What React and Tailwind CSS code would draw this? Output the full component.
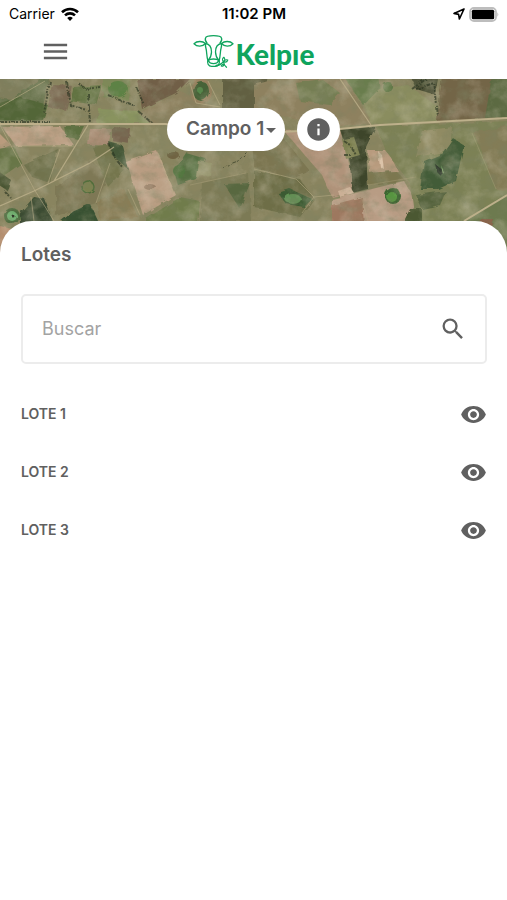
import React, { useState } from "react";
import { MdArrowDropDown, MdInfo, MdMenu, MdSearch, MdVisibility } from "react-icons/md";

const lots = ["LOTE 1", "LOTE 2", "LOTE 3"];

function StatusBar() {
  return (
    <div className="grid grid-cols-3 items-center h-7 pl-[9px] pr-2 text-black text-sm">
      <div className="flex items-center gap-1.5">
        <span>Carrier</span>
        <svg viewBox="0 0 18 14" className="w-[18px] h-[14px]" fill="none" stroke="black" strokeWidth="2.6">
          <path d="M1 5.2a11.6 11.6 0 0 1 16 0" />
          <path d="M4 8.4a7.3 7.3 0 0 1 10 0" />
          <path d="M9 14 6.2 11a4 4 0 0 1 5.6 0Z" fill="black" stroke="none" />
        </svg>
      </div>
      <span className="text-center text-[15px] leading-5 font-semibold">11:02 PM</span>
      <div className="flex items-center justify-end gap-1">
        <svg viewBox="0 0 12 12" className="w-3 h-3" fill="none" stroke="black" strokeWidth="1.6" strokeLinejoin="round">
          <path d="M11 1 1 5.4l4.6 1L6.4 11Z" />
        </svg>
        <svg viewBox="0 0 30 15" className="w-[30px] h-[15px]">
          <rect x="1" y="1" width="26" height="13" rx="4" fill="white" stroke="#bdbdbd" strokeWidth="1.8" />
          <rect x="2.8" y="2.8" width="22.4" height="9.4" rx="1.5" fill="black" />
          <path d="M28.4 5.2q1.8 2.3 0 4.6Z" fill="#bdbdbd" />
        </svg>
      </div>
    </div>
  );
}

function Logo() {
  return (
    <div className="flex items-center gap-0.5 text-[#0fa45d]">
      <svg viewBox="0 0 41 34" className="w-[41px] h-[34px]" fill="none" stroke="currentColor" strokeWidth="1.3" strokeLinecap="round" strokeLinejoin="round">
        {/* crown */}
        <path d="M14 8C12.500 6.500 12 4.500 12.500 3c.5-1.700 2-2.300 8-2.300s7.500.6 8 2.300c.5 1.500 0 3.500-1.500 5" />
        {/* ears */}
        <path d="M12.500 8.500C9.500 5.800 4 5.800 1 8.700c3 3.200 8.500 3.200 11.500-.2Z" />
        <path d="M28.500 8.500c3-2.700 8.500-2.700 11.500.2-3 3.200-8.500 3.200-11.500-.2Z" />
        {/* face */}
        <path d="M12.500 8.500c4 .5 6 4 6 8.500 0 4-1.500 6.500-3.500 9-1-3-1.200-6-1.500-9.500-.2-3-1.500-5-1-8Z" />
        <path d="M28.500 8.500c-4 .5-6 4-6 8.500 0 4 1.500 6.500 3.500 9 1-3 1.200-6 1.500-9.500.2-3 1.500-5 1-8Z" />
        {/* muzzle */}
        <path d="M15 25.500c2.500-2 8.500-2 11 0 1.500 2.500-.8 5.800-3.500 5.800h-4c-2.700 0-5-3.300-3.500-5.800Z" />
        <path d="M15.500 26c1.500 3.500 8.500 3.500 10 0" />
        {/* sprig */}
        <path d="M23 30.500c3 0 5.500-1.500 7.500-4M30.500 27c.3 2.300 1.300 3.800 3 5.200" />
        <path d="M30.800 26.500c-1.800-1-1.800-3 0-4.300 1.300 1.500 1.300 3.200 0 4.300ZM31 27c.5-1.800 2-2.600 3.800-2-.5 1.800-1.900 2.500-3.800 2ZM31.200 29.500c-1.500-.3-2.500.2-3 1.500 1.400.6 2.500 0 3-1.500Z" strokeWidth="1.1" />
      </svg>
      <span className="font-[Lato] font-black text-[28px] leading-8 pt-1">Kelpıe</span>
    </div>
  );
}

function FieldMap() {
  return (
    <svg viewBox="0 0 507 174" preserveAspectRatio="xMidYMid slice" className="absolute inset-0 w-full h-full" aria-hidden="true">
      <defs>
        <filter id="soil" x="0" y="0" width="100%" height="100%">
          <feTurbulence type="fractalNoise" baseFrequency="0.07 0.09" numOctaves="5" seed="8" />
          <feColorMatrix values="0 0 0 0 0.2  0 0 0 0 0.22  0 0 0 0 0.12  1.8 0 0 0 -0.76" />
        </filter>
        <filter id="dry" x="0" y="0" width="100%" height="100%">
          <feTurbulence type="fractalNoise" baseFrequency="0.05" numOctaves="5" seed="21" />
          <feColorMatrix values="0 0 0 0 0.75  0 0 0 0 0.68  0 0 0 0 0.54  0 1.8 0 0 -0.8" />
        </filter>
        <filter id="soft" x="-10%" y="-10%" width="120%" height="120%">
          <feTurbulence type="fractalNoise" baseFrequency="0.12" numOctaves="2" seed="4" />
          <feDisplacementMap in="SourceGraphic" scale="4" />
          <feGaussianBlur stdDeviation="0.6" />
        </filter>
      </defs>
      <rect width="507" height="174" fill="#89845f" />
      <g filter="url(#soft)">
        {/* north strip */}
        <path d="M-4 -4H50L40 42H-4Z" fill="#6b744f" />
        <path d="M-4 25 20 18 48 26 43 41H-4Z" fill="#526639" />
        <path d="M-4 -4h49L12 20-4 18Z" fill="#807e5b" />
        <path d="M52 5 72 6 66 32 48 28Z" fill="#7b6b52" />
        <path d="M74 8 102 6 96 26 70 22Z" fill="#627342" />
        <path d="M103-4h28l-2 26-26-4Z" fill="#7e8959" />
        <path d="M99 30 140 32 152 44H97Z" fill="#89935e" />
        <path d="M138 34 180 12 220 30 240 46H152Z" fill="#8d815f" />
        <path d="M137 0 190 0 176 14 142 30Z" fill="#715f46" />
        <path d="M222-4h46l-6 34h-40Z" fill="#626142" />
        <path d="M254 6 290-4 344-4 372 46 318 46 254 30Z" fill="#8e815e" />
        <path d="M296 4 322 0 340 14 330 26 300 22Z" fill="#757e52" />
        <path d="M343-4h36l2 18-18 12Z" fill="#697d4d" />
        <path d="M379 10 408 6 438 28 436 43 372 46 364 26Z" fill="#8a8d5f" />
        <path d="M410-4h30l-4 20-20-6Z" fill="#4c4f34" />
        <path d="M442-4h69v42l-74 5Z" fill="#736546" />
        <path d="M492-4h19v42l-26 1Z" fill="#5c6a43" />
        {/* fields under the main road */}
        <path d="M2 48 60 47 74 66 16 67Z" fill="#bb9f84" />
        <path d="M-4 51 11 66-4 72Z" fill="#b99b7d" />
        <path d="M64 47 84 47 78 60 66 58Z" fill="#5d7040" />
        <path d="M90 50h22l-4 16H88Z" fill="#a68a72" />
        <path d="M112 48 130 49 130 65 112 62Z" fill="#77654f" />
        <path d="M130 48h38l8 24-48 4Z" fill="#8b8762" />
        <path d="M-4 70 14 68 22 84-4 102Z" fill="#687646" />
        <path d="M24 86 58 70 50 104 32 98Z" fill="#71734e" />
        <path d="M-4 90 12 102 8 112-4 104Z" fill="#495433" />
        <path d="M56 108 92 82 108 98 96 124 56 137Z" fill="#7e7855" />
        <path d="M92 68 118 64 126 88 108 108Z" fill="#74764d" />
        <path d="M108 62 122 66 128 90 112 76Z" fill="#455838" />
        <path d="M96 124 124 110 138 138 100 141Z" fill="#897d56" />
        <path d="M126 83 157 72 176 116 143 136Z" fill="#b99d82" />
        <path d="M174 92 186 74 206 80 196 100 178 106Z" fill="#566f42" />
        <path d="M198 82 212 84 210 96 196 98Z" fill="#8e8e65" />
        <path d="M202 104 248 94 252 142 200 142Z" fill="#7c7a55" />
        <path d="M224 105 250 104 240 130Z" fill="#586840" />
        <path d="M20 134 34 118 45 120 54 146H20Z" fill="#3a4c31" />
        <path d="M56 146 74 132 90 125 100 146Z" fill="#375132" />
        <path d="M146 140 180 118 200 122 198 146H146Z" fill="#707b4c" />
        {/* east of the campo */}
        <path d="M284 52 340 50 356 112 332 118 322 96Z" fill="#b0937a" />
        <path d="M340 50 376 47 366 68 368 110 352 114 350 84Z" fill="#3d452c" />
        <path d="M342 60 354 58 360 76 346 80Z" fill="#7a7e4e" />
        <path d="M368 72 388 72 398 92 370 94Z" fill="#b89b7e" />
        <path d="M368 94 396 92 406 102 368 106Z" fill="#7b774f" />
        <path d="M332 120 404 102 420 130 408 146H332Z" fill="#b89c84" />
        <path d="M332 126 362 118 364 146H332Z" fill="#9d785f" />
        <path d="M254 92 300 100 314 120 300 138 254 128Z" fill="#6e6e47" />
        <path d="M254 62 284 60 310 92 292 100 254 88Z" fill="#7c7651" />
        <path d="M376 47 511 42V178H420L410 104 386 72Z" fill="#7c8154" />
        <path d="M422 52 452 48 450 72 416 78Z" fill="#908b63" />
        <path d="M424 82 444 74 454 60 464 66 456 102 438 110 420 110Z" fill="#425c38" />
        <path d="M416 116 446 112 440 126 422 130Z" fill="#55633c" />
        <path d="M474 54 511 46V112L496 110Z" fill="#837c56" />
        <path d="M466 140 511 114V178H490Z" fill="#6d7a50" />
        <path d="M478 140 493 140 490 150Z" fill="#8a5f46" />
        <path d="M-4 146 12 150V178H-4Z" fill="#b58f70" />
        <path d="M404 142 410 130 422 130 422 146Z" fill="#4b5833" />
      </g>
      {/* ponds and groves */}
      <g filter="url(#soft)">
        <ellipse cx="118" cy="10" rx="10" ry="8" fill="#5d8244" />
        <ellipse cx="201" cy="12" rx="11" ry="13" fill="#97815f" />
        <ellipse cx="201" cy="12" rx="8" ry="10" fill="#476238" />
        <circle cx="200" cy="11" r="3" fill="#56874b" />
        <circle cx="179" cy="92" r="6" fill="#527740" />
        <circle cx="88" cy="108" r="6" fill="#7b8150" stroke="#506d3a" strokeWidth="1.500" />
        <circle cx="12" cy="137" r="8" fill="#4b6b3c" />
        <circle cx="12" cy="137" r="5" fill="#6dad6d" />
        <circle cx="13" cy="137" r="1.500" fill="#202c1b" />
        <path d="M278 114 290 110 312 120 304 128 286 125Z" fill="#3b5a31" />
        <ellipse cx="293" cy="120" rx="8" ry="5" fill="#5f9052" />
        <circle cx="393" cy="117" r="8" fill="#3c6530" />
        <circle cx="392" cy="118" r="5" fill="#56953f" />
        <path d="M436 86 444 92 442 98 438 94Z" fill="#1b291a" />
        <path d="m441 86 4 9-2 1Z" fill="#7ca467" />
        <circle cx="388" cy="8" r="5" fill="#5c7443" />
        <path d="M338 112 350 108 354 114 340 118Z" fill="#cbb096" />
        <path d="M378 72 382 76 384 90 380 88Z" fill="#dcc3a9" />
        <ellipse cx="150" cy="108" rx="6" ry="3" fill="#957b63" />
        <ellipse cx="173" cy="76" rx="6" ry="4" fill="#706342" />
      </g>
      <rect width="507" height="174" filter="url(#soil)" opacity="0.6" />
      <rect width="507" height="174" filter="url(#dry)" opacity="0.4" />
      {/* tree lines */}
      <g fill="none" stroke="#2c3521" strokeWidth="2" strokeDasharray="4 1 2 2 1 1" opacity="0.65" filter="url(#soft)">
        <path d="M50 2 44 34M66 2 70 26 90 32M88 14 90 44M78 4 86 10 100 8M108 16 136 28M136 8 144 26M138 32 152 44M0 43H50M412 10 426 0M416 10 434 4 436 16 438 38" />
        <path d="M108 64 116 80 124 90M344 62 350 66 356 76M344 76 352 76M4 112 12 120" />
        <path d="M222 88 238 82 250 70" strokeWidth="1" />
      </g>
      {/* roads */}
      <g fill="none" stroke="#bdb08b">
        <path d="M0 45H165L260 54 340 50 380 46 507 39" strokeWidth="1.800" />
        <path d="M88 46 54 102 34 112 0 127M54 102 90 84 114 68" strokeWidth="1.300" opacity="0.8" />
        <path d="M0 46 34 110 54 142M31 118 34 142M60 70 48 104M16 67H74" strokeWidth="0.800" opacity="0.7" />
        <path d="M340 0 371 46" strokeWidth="1.200" opacity="0.8" />
        <path d="M507 116 464 142" strokeWidth="2" />
        <path d="M254 90 296 100 314 118 334 116M314 118 302 134M158 74 174 116M128 110 140 136M110 84 96 124" strokeWidth="0.800" opacity="0.6" />
        <path d="M472 54 496 110M368 106 416 98M190 106 246 94M362 120 368 142" strokeWidth="0.600" opacity="0.5" />
        <path d="M190 4 196 24 220 28M208 2 220 26M45 2 0 28" strokeWidth="1" opacity="0.6" />
      </g>
    </svg>
  );
}

function App() {
  const [query, setQuery] = useState("");
  const [hidden, setHidden] = useState([]);

  const toggleLot = (lot) =>
    setHidden((prev) => (prev.includes(lot) ? prev.filter((l) => l !== lot) : [...prev, lot]));

  const visibleLots = lots.filter((lot) => lot.toLowerCase().includes(query.toLowerCase()));

  return (
    <div className="min-h-screen flex flex-col bg-white text-[#606060] font-[Inter,sans-serif]">
      <StatusBar />

      {/* HEADER */}
      <header className="grid grid-cols-[1fr_auto_1fr] items-center h-[51px] px-10 pb-1">
        <button type="button" aria-label="Menu" className="justify-self-start">
          <MdMenu className="size-[31px]" />
        </button>
        <Logo />
      </header>

      {/* MAP */}
      <section className="relative flex justify-center gap-3 pt-[29px] pb-[102px]">
        <FieldMap />
        <div className="relative">
          <select
            aria-label="Campo"
            className="appearance-none w-[118px] h-[43px] pl-[19px] rounded-full bg-white text-[19px] font-semibold"
          >
            <option>Campo 1</option>
          </select>
          <MdArrowDropDown className="absolute right-0.5 top-2.5 size-6 pointer-events-none" />
        </div>
        <button
          type="button"
          aria-label="Información"
          className="relative flex items-center justify-center size-[43px] rounded-full bg-white"
        >
          <MdInfo className="size-[27px]" />
        </button>
      </section>

      {/* LOTS */}
      <main className="relative -mt-8 grow rounded-t-[32px] bg-white pl-[21px] pr-5 pt-5">
        <h1 className="text-[19px] leading-7 font-semibold">Lotes</h1>

        <label className="flex items-center mt-[25px] h-[70px] pl-[19px] pr-[18px] rounded-[5px] border-2 border-[#ececec]">
          <input
            type="text"
            aria-label="Buscar"
            placeholder="Buscar"
            value={query}
            onChange={(e) => setQuery(e.target.value)}
            className="grow min-w-0 text-lg outline-none placeholder:text-[#a3a3a3]"
          />
          <MdSearch className="size-7" />
        </label>

        <ul className="mt-[21px]">
          {visibleLots.map((lot) => (
            <li key={lot} className="flex items-center justify-between h-[58px] text-sm font-semibold">
              <span>{lot}</span>
              <button
                type="button"
                aria-label={`Ver ${lot}`}
                aria-pressed={!hidden.includes(lot)}
                onClick={() => toggleLot(lot)}
                className={hidden.includes(lot) ? "opacity-40" : ""}
              >
                <MdVisibility className="size-[27px]" />
              </button>
            </li>
          ))}
        </ul>
      </main>
    </div>
  );
}

export default App;
